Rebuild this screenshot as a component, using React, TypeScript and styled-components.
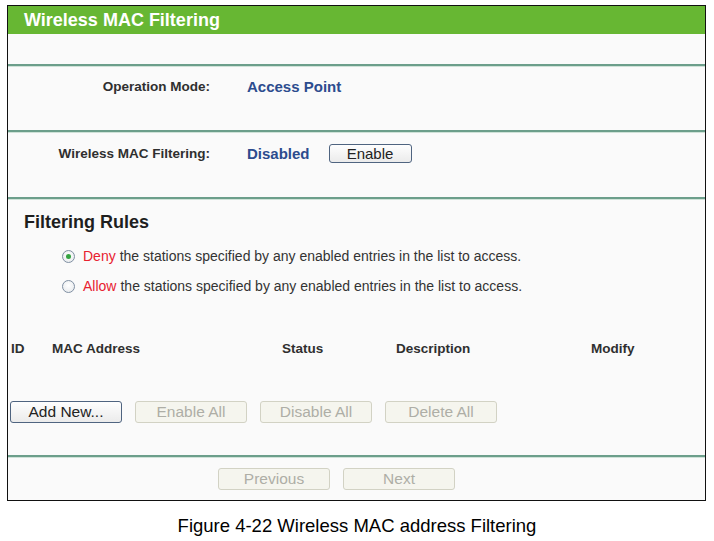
import styled, { createGlobalStyle } from 'styled-components';

const GlobalStyle = createGlobalStyle`
  body {
    margin: 0;
    background: #ffffff;
    font-family: "Liberation Sans", Arial, sans-serif;
  }
`;

const StFrame = styled.div`
  margin: 5px 0 0 7px;
  width: 697px;
  border: 1px solid #111;
  background: #fafafa;
`;

const StHeader = styled.div`
  height: 28px;
  background: #67b733;
  display: flex;
  align-items: center;
  padding-left: 16px;
  color: #ffffff;
  font-size: 18px;
  font-weight: bold;
`;

const StSection = styled.div<{ $height?: number }>`
  height: ${(p) => (p.$height ? `${p.$height}px` : 'auto')};
  border-bottom: 2px solid #6c9e8b;
  box-shadow: 0 1px 0 #cfe2d8;
  display: flex;
  flex-direction: column;
`;

const StFieldRow = styled.div`
  flex: 1;
  display: flex;
  align-items: center;
  padding-bottom: 23px;
`;

const StLabel = styled.div`
  width: 202px;
  text-align: right;
  font-size: 13.5px;
  font-weight: bold;
  color: #2f2f2f;
  margin-right: 37px;
`;

const StValue = styled.div`
  font-size: 15px;
  font-weight: bold;
  color: #2c4c8e;
  margin-right: 19px;
`;

const StButton = styled.button<{ $width: number; $off?: boolean }>`
  width: ${(p) => p.$width}px;
  height: 22px;
  padding: 0;
  border-radius: 3px;
  font-family: "Liberation Sans", Arial, sans-serif;
  font-size: 15.5px;
  border: 1px solid ${(p) => (p.$off ? '#d2d2c4' : '#4f6480')};
  background: ${(p) =>
    p.$off ? '#f5f5ee' : 'linear-gradient(#fefefe, #ebebeb)'};
  color: ${(p) => (p.$off ? '#aeaea6' : '#222')};
`;

const StSmallButton = styled(StButton)`
  height: 19px;
  font-size: 15px;
`;

const StRulesTitle = styled.div`
  margin: 12px 0 0 16px;
  height: 22px;
  line-height: 22px;
  font-size: 18px;
  font-weight: bold;
  color: #1e1e1e;
`;

const StRadioList = styled.div`
  margin-top: 8px;
  padding-left: 54px;
`;

const StRadioRow = styled.label`
  height: 30px;
  display: flex;
  align-items: center;
  font-size: 14px;
  color: #333;
`;

const StRadio = styled.span<{ $checked?: boolean }>`
  width: 11px;
  height: 11px;
  border-radius: 50%;
  border: 1px solid #7f8fa2;
  background: radial-gradient(circle at 50% 40%, #ffffff, #e4e7ea);
  margin-right: 8px;
  display: flex;
  align-items: center;
  justify-content: center;
  &::after {
    content: '';
    display: ${(p) => (p.$checked ? 'block' : 'none')};
    width: 5px;
    height: 5px;
    border-radius: 50%;
    background: #34a341;
  }
`;

const StKeyword = styled.span`
  color: #e8202f;
  margin-right: 4px;
`;

const StTableHead = styled.div`
  margin-top: 37px;
  height: 20px;
  display: grid;
  grid-template-columns: 41px 230px 114px 195px 1fr;
  align-items: center;
  padding-left: 3px;
  font-size: 13.5px;
  font-weight: bold;
  color: #2f2f2f;
`;

const StButtonRow = styled.div<{ $left: number }>`
  display: flex;
  gap: 13px;
  padding-left: ${(p) => p.$left}px;
`;

const StActionRow = styled(StButtonRow)`
  margin: 43px 0 32px;
`;

const StPager = styled(StButtonRow)`
  padding-top: 11px;
  padding-bottom: 10px;
`;

const StCaption = styled.div`
  margin-top: 14px;
  text-align: center;
  font-size: 18.5px;
  line-height: 22px;
  color: #000;
`;

export default function App() {
  return (
    <>
      <GlobalStyle />
      <StFrame>
        <StHeader>Wireless MAC Filtering</StHeader>
        <StSection $height={30} />
        <StSection $height={64}>
          <StFieldRow>
            <StLabel>Operation Mode:</StLabel>
            <StValue>Access Point</StValue>
          </StFieldRow>
        </StSection>
        <StSection $height={65}>
          <StFieldRow>
            <StLabel>Wireless MAC Filtering:</StLabel>
            <StValue>Disabled</StValue>
            <StSmallButton $width={83}>Enable</StSmallButton>
          </StFieldRow>
        </StSection>
        <StSection>
          <StRulesTitle>Filtering Rules</StRulesTitle>
          <StRadioList>
            <StRadioRow>
              <StRadio $checked />
              <StKeyword>Deny</StKeyword>
              the stations specified by any enabled entries in the list to access.
            </StRadioRow>
            <StRadioRow>
              <StRadio />
              <StKeyword>Allow</StKeyword>
              the stations specified by any enabled entries in the list to access.
            </StRadioRow>
          </StRadioList>
          <StTableHead>
            <span>ID</span>
            <span>MAC Address</span>
            <span>Status</span>
            <span>Description</span>
            <span>Modify</span>
          </StTableHead>
          <StActionRow $left={2}>
            <StButton $width={112}>Add New...</StButton>
            <StButton $width={112} $off>Enable All</StButton>
            <StButton $width={112} $off>Disable All</StButton>
            <StButton $width={112} $off>Delete All</StButton>
          </StActionRow>
        </StSection>
        <StPager $left={210}>
          <StButton $width={112} $off>Previous</StButton>
          <StButton $width={112} $off>Next</StButton>
        </StPager>
      </StFrame>
      <StCaption>Figure 4-22 Wireless MAC address Filtering</StCaption>
    </>
  );
}
